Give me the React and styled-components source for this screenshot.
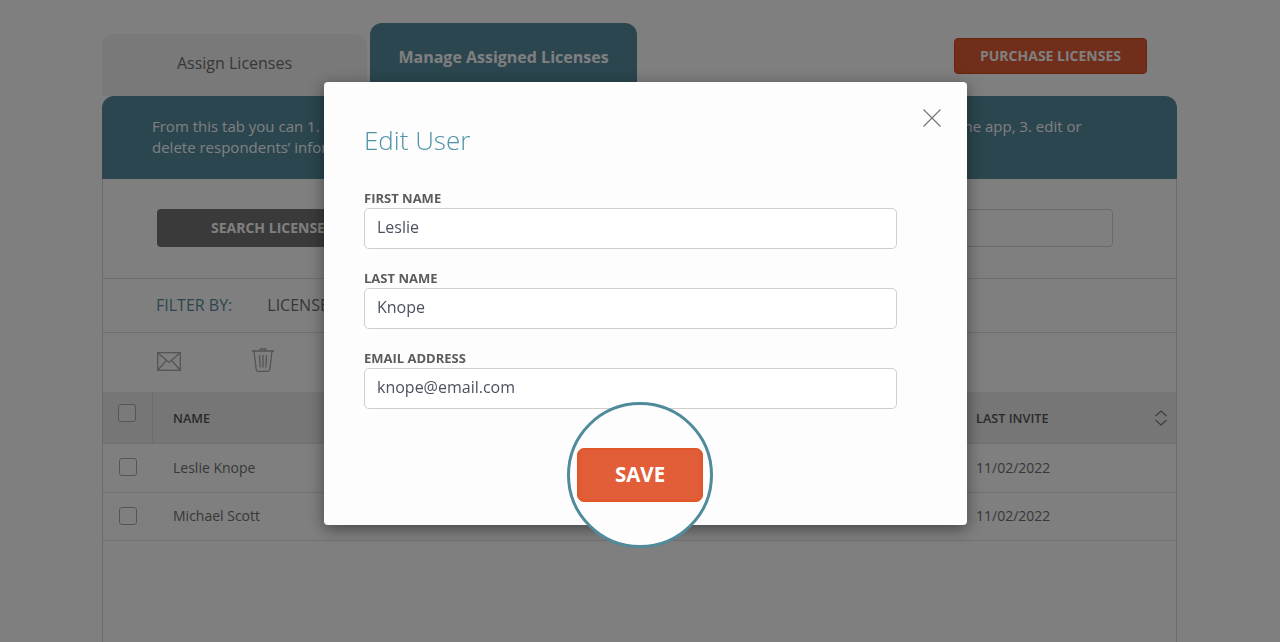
import React from 'react';
import styled, { createGlobalStyle } from 'styled-components';

const GlobalStyle = createGlobalStyle`
  html, body {
    margin: 0;
    height: 100%;
    overflow: hidden;
    background: #fff;
    font-family: "Open Sans", "Liberation Sans", sans-serif;
  }
  * { box-sizing: border-box; }
`;

const Page = styled.div`
  width: 1075px;
  height: 642px;
  margin-left: 102px;
  display: flex;
  flex-direction: column;
`;

const TabBar = styled.div`
  height: 96px;
  display: flex;
  align-items: flex-end;
  gap: 3px;
  position: relative;
`;

const Tab = styled.div`
  height: ${({ $active }) => ($active ? '73px' : '62px')};
  width: ${({ $active }) => ($active ? '267px' : '265px')};
  padding-top: ${({ $active }) => ($active ? '22px' : '17px')};
  border-radius: 12px 12px 0 0;
  text-align: center;
  font-size: 16px;
  font-weight: ${({ $active }) => ($active ? 700 : 400)};
  line-height: 24px;
  color: ${({ $active }) => ($active ? '#fff' : '#707070')};
  background: ${({ $active }) => ($active ? '#568c9f' : '#f3f3f3')};
`;

const PurchaseButton = styled.div`
  width: 193px;
  height: 36px;
  margin: 38px 30px 0 auto;
  align-self: flex-start;
  border: 1px solid #d2491f;
  border-radius: 4px;
  background: #e35d35;
  color: #fff;
  font-size: 14px;
  font-weight: 700;
  line-height: 34px;
  text-align: center;
`;

const Banner = styled.div`
  height: 83px;
  padding: 20px 50px;
  border-radius: 12px 12px 0 0;
  background: #568c9f;
  color: #fff;
  font-size: 15px;
  line-height: 21px;
  white-space: nowrap;
`;

const Frame = styled.div`
  flex: 1;
  border: solid #d8d8d8;
  border-width: 0 1px;
`;

const SearchRow = styled.div`
  height: 100px;
  padding: 30px 63px 0 54px;
  display: flex;
  justify-content: space-between;
  border-bottom: 1px solid #ddd;
`;

const SearchButton = styled.div`
  width: 260px;
  height: 38px;
  padding-left: 54px;
  border-radius: 4px;
  background: #747474;
  color: #fff;
  font-size: 14px;
  font-weight: 700;
  line-height: 38px;
`;

const SearchBox = styled.div`
  width: 400px;
  height: 38px;
  border: 1px solid #d4d4d4;
  border-radius: 4px;
`;

const FilterRow = styled.div`
  height: 54px;
  padding: 0 0 2px 53px;
  display: flex;
  align-items: center;
  gap: 35px;
  border-bottom: 1px solid #ddd;
  font-size: 16px;
  color: #707070;
`;

const FilterLabel = styled.span`
  color: #568c9f;
`;

const ActionRow = styled.div`
  height: 59px;
  padding: 15px 0 0 54px;
  display: flex;
  align-items: flex-start;
  gap: 70px;
`;

const TableRow = styled.div`
  display: grid;
  grid-template-columns: 50px 1fr 200px;
  align-items: center;
  height: ${({ $head }) => ($head ? '52px' : '48.5px')};
  padding-bottom: ${({ $head }) => ($head ? '0' : '1px')};
  border-bottom: 1px solid #e2e2e2;
  background: ${({ $head }) => ($head ? '#ededed' : 'transparent')};
  color: ${({ $head }) => ($head ? '#555' : '#707070')};
  font-size: ${({ $head }) => ($head ? '12.7px' : '14px')};
  font-weight: ${({ $head }) => ($head ? 600 : 400)};
`;

const CheckCell = styled.div`
  height: 100%;
  display: flex;
  align-items: center;
  padding-left: ${({ $head }) => ($head ? '15px' : '16px')};
  border-right: ${({ $head }) => ($head ? '1px solid #ddd' : 'none')};
`;

const Checkbox = styled.span`
  width: 18px;
  height: 18px;
  margin-top: ${({ $head }) => ($head ? '-9px' : '0')};
  border: 1.5px solid #aaa;
  border-radius: 3px;
  background: ${({ $head }) => ($head ? '#f4f4f4' : '#fff')};
`;

const NameCell = styled.div`
  padding-left: 20px;
`;

const InviteCell = styled.div`
  padding-right: 8px;
  display: flex;
  justify-content: space-between;
  align-items: center;
`;

const Overlay = styled.div`
  position: fixed;
  inset: 0;
  background: rgba(0, 0, 0, 0.5);
`;

const Modal = styled.div`
  position: absolute;
  left: 324px;
  top: 82px;
  width: 643px;
  height: 443px;
  padding: 40px 70px 0 40px;
  border-radius: 4px;
  background: #fdfdfd;
  box-shadow: 0 4px 16px rgba(0, 0, 0, 0.45);
`;

const CloseButton = styled.svg`
  position: absolute;
  right: 25px;
  top: 26px;
  width: 20px;
  height: 20px;
`;

const Title = styled.h2`
  margin: 0 0 31.5px;
  font-size: 26px;
  font-weight: 300;
  line-height: 36px;
  color: #4f93a8;
`;

const Field = styled.div`
  margin-bottom: 21px;
`;

const FieldLabel = styled.div`
  margin-bottom: 2px;
  font-size: 13px;
  font-weight: 700;
  line-height: 16px;
  color: #5c5c5c;
`;

const FieldInput = styled.div`
  height: 41px;
  padding-left: 12px;
  border: 1.5px solid #cfcfcf;
  border-radius: 5px;
  background: #fff;
  color: #4b5160;
  font-size: 16px;
  line-height: 37px;
`;

const Spotlight = styled.div`
  position: absolute;
  left: 243px;
  top: 320px;
  width: 146px;
  height: 146px;
  display: flex;
  align-items: center;
  justify-content: center;
  border: 3px solid #4f8b9b;
  border-radius: 50%;
  background: #fdfdfd;
`;

const SaveButton = styled.div`
  width: 126px;
  height: 54px;
  border: 1px solid #e2531f;
  border-radius: 7px;
  background: #e25e38;
  box-shadow: inset 0 0 4px rgba(205, 70, 20, 0.35);
  color: #fff;
  font-size: 20.5px;
  font-weight: 700;
  line-height: 50px;
  text-align: center;
`;

const EnvelopeGlyph = styled.svg`
  width: 24px;
  height: 19px;
  margin-top: 4px;
`;

const EnvelopeIcon = () => (
  <EnvelopeGlyph viewBox="0 0 24 19" fill="none" stroke="#a8a8a8" strokeWidth="1.3">
    <rect x="0.7" y="0.7" width="22.600" height="17.600" />
    <path d="M0.700 0.700 12 10.500 23.300 0.700M0.700 18.300 9.500 8.300M23.300 18.300 14.500 8.300" />
  </EnvelopeGlyph>
);

const TrashIcon = () => (
  <svg width="24" height="24" viewBox="0 0 24 24" fill="none" stroke="#a8a8a8" strokeWidth="1.3">
    <path d="M1 3h22M8.500 3 9.500 1h5l1 2M3 3l2.200 18.500q.2 1.800 2 1.800h9.600q1.800 0 2-1.800L21 3" />
    <path d="M8.500 7l.7 12.500M12 7v12.500M15.500 7l-.7 12.500" />
  </svg>
);

const SortIcon = () => (
  <svg width="14" height="16" viewBox="0 0 14 16" fill="none" stroke="#777" strokeWidth="1.1">
    <path d="M1.500 6 7 1l5.500 5M1.500 10 7 15l5.500-5" />
  </svg>
);

const people = [
  { name: 'Leslie Knope', invite: '11/02/2022' },
  { name: 'Michael Scott', invite: '11/02/2022' },
];

const fields = [
  { label: 'FIRST NAME', value: 'Leslie' },
  { label: 'LAST NAME', value: 'Knope' },
  { label: 'EMAIL ADDRESS', value: 'knope@email.com' },
];

export default function App() {
  return (
    <>
      <GlobalStyle />
      <Page>
        <TabBar>
          <Tab>Assign Licenses</Tab>
          <Tab $active>Manage Assigned Licenses</Tab>
          <PurchaseButton>PURCHASE LICENSES</PurchaseButton>
        </TabBar>
        <Banner>
          From this tab you can 1. view the current status of all of your assigned licenses, 2. resend an invitation to download the app, 3. edit or
          <br />
          delete respondents’ information.
        </Banner>
        <Frame>
          <SearchRow>
            <SearchButton>SEARCH LICENSES</SearchButton>
            <SearchBox />
          </SearchRow>
          <FilterRow>
            <FilterLabel>FILTER BY:</FilterLabel>
            <span>LICENSE STATUS</span>
          </FilterRow>
          <ActionRow>
            <EnvelopeIcon />
            <TrashIcon />
          </ActionRow>
          <TableRow $head>
            <CheckCell $head><Checkbox $head /></CheckCell>
            <NameCell>NAME</NameCell>
            <InviteCell>LAST INVITE <SortIcon /></InviteCell>
          </TableRow>
          {people.map((person) => (
            <TableRow key={person.name}>
              <CheckCell><Checkbox /></CheckCell>
              <NameCell>{person.name}</NameCell>
              <InviteCell>{person.invite}</InviteCell>
            </TableRow>
          ))}
        </Frame>
      </Page>
      <Overlay />
      <Modal>
        <CloseButton viewBox="0 0 20 20" fill="none" stroke="#777" strokeWidth="1.2">
          <path d="M1.500 1.500l17 17M18.500 1.500l-17 17" />
        </CloseButton>
        <Title>Edit User</Title>
        {fields.map((field) => (
          <Field key={field.label}>
            <FieldLabel>{field.label}</FieldLabel>
            <FieldInput>{field.value}</FieldInput>
          </Field>
        ))}
        <Spotlight>
          <SaveButton>SAVE</SaveButton>
        </Spotlight>
      </Modal>
    </>
  );
}
